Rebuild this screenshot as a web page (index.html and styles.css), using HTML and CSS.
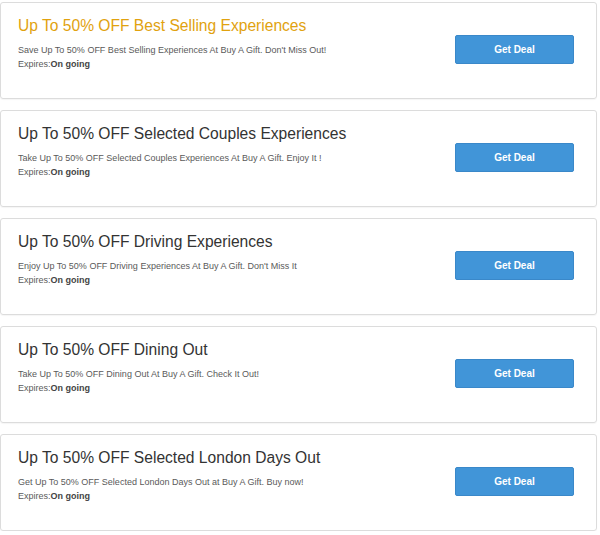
FILE: index.html
```html
<!DOCTYPE html>
<html>
<head>
<meta charset="utf-8">
<link rel="stylesheet" href="styles.css">
</head>
<body>
<div class="list">
  <div class="card">
    <div class="info">
      <div class="title gold">Up To 50% OFF Best Selling Experiences</div>
      <div class="desc">Save Up To 50% OFF Best Selling Experiences At Buy A Gift. Don't Miss Out!</div>
      <div class="exp">Expires:<b>On going</b></div>
    </div>
    <a class="btn">Get Deal</a>
  </div>
  <div class="card">
    <div class="info">
      <div class="title">Up To 50% OFF Selected Couples Experiences</div>
      <div class="desc">Take Up To 50% OFF Selected Couples Experiences At Buy A Gift. Enjoy It !</div>
      <div class="exp">Expires:<b>On going</b></div>
    </div>
    <a class="btn">Get Deal</a>
  </div>
  <div class="card">
    <div class="info">
      <div class="title">Up To 50% OFF Driving Experiences</div>
      <div class="desc">Enjoy Up To 50% OFF Driving Experiences At Buy A Gift. Don't Miss It</div>
      <div class="exp">Expires:<b>On going</b></div>
    </div>
    <a class="btn">Get Deal</a>
  </div>
  <div class="card">
    <div class="info">
      <div class="title">Up To 50% OFF Dining Out</div>
      <div class="desc">Take Up To 50% OFF Dining Out At Buy A Gift. Check It Out!</div>
      <div class="exp">Expires:<b>On going</b></div>
    </div>
    <a class="btn">Get Deal</a>
  </div>
  <div class="card">
    <div class="info">
      <div class="title">Up To 50% OFF Selected London Days Out</div>
      <div class="desc">Get Up To 50% OFF Selected London Days Out at Buy A Gift. Buy now!</div>
      <div class="exp">Expires:<b>On going</b></div>
    </div>
    <a class="btn">Get Deal</a>
  </div>
</div>
</body>
</html>
```
FILE: styles.css
```css
html, body { margin: 0; padding: 0; background: #fff; }
body { font-family: "Liberation Sans", Arial, sans-serif; }
.list {
  display: flex;
  flex-direction: column;
  gap: 11px;
  padding-top: 2px;
  width: 597px;
}
.card {
  box-sizing: border-box;
  height: 97px;
  border: 1px solid #dcdcdc;
  border-radius: 3px;
  box-shadow: 0 1px 1px rgba(0,0,0,0.04);
  display: flex;
  align-items: flex-start;
  justify-content: space-between;
  padding: 12px 22px 0 17px;
}
.title {
  font-size: 15.6px;
  color: #333;
  line-height: 22px;
}
.title.gold { color: #e1a20f; }
.desc {
  font-size: 9px;
  color: #5a5a5a;
  margin-top: 7px;
  line-height: 13px;
}
.exp {
  font-size: 9px;
  color: #5a5a5a;
  line-height: 15px;
}
.exp b { color: #444; }
.btn {
  margin-top: 20px;
  width: 119px;
  height: 29px;
  box-sizing: border-box;
  background: #4195d8;
  border: 1px solid #3a88c9;
  border-radius: 2px;
  color: #fff;
  font-size: 10px;
  font-weight: bold;
  display: flex;
  align-items: center;
  justify-content: center;
}
```
